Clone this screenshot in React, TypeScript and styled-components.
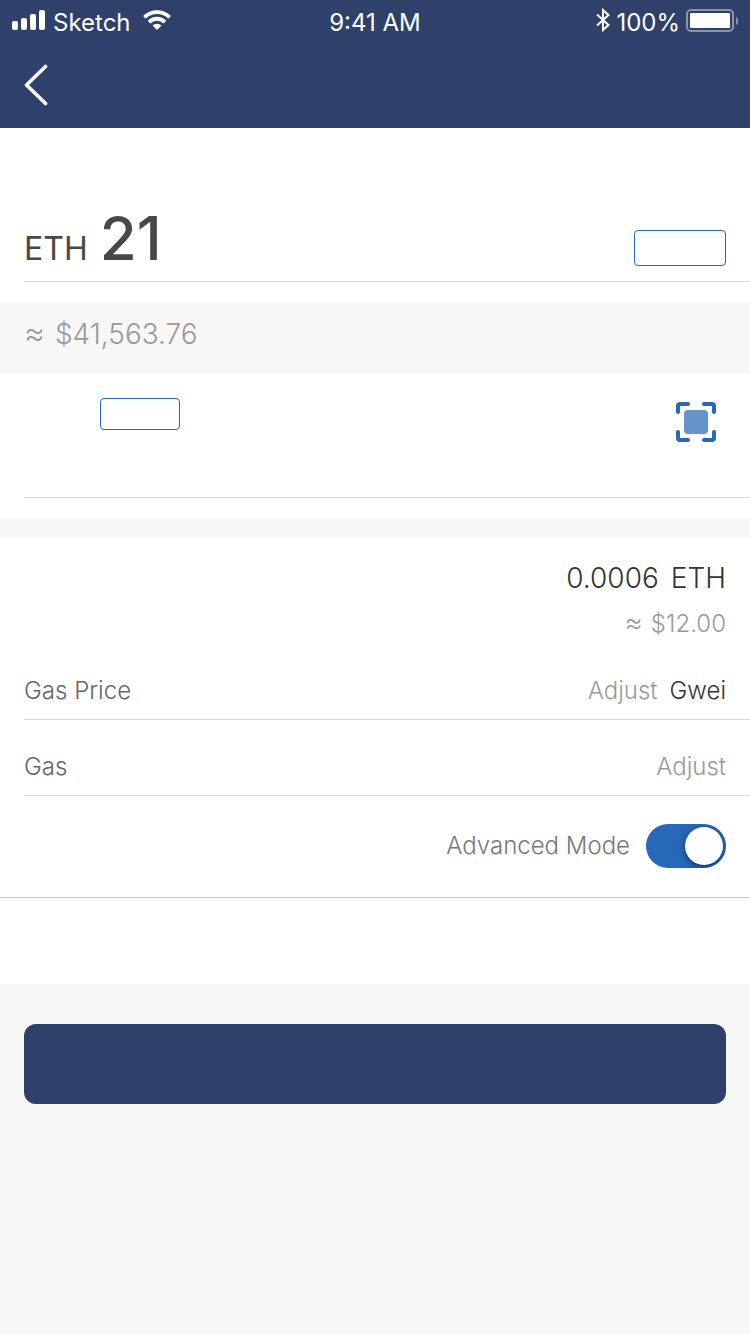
import React, { useState } from "react";
import styled, { createGlobalStyle } from "styled-components";

const navy = "#2f406b";
const blue = "#2768b9";
const line = "#d9d9d9";

const GlobalStyle = createGlobalStyle`
  *, *::before { box-sizing: border-box; }
  body {
    margin: 0;
    background: #f7f7f7;
    font-family: Inter, "Noto Sans", sans-serif;
    font-size: 24px;
    font-weight: 300;
    line-height: 32px;
  }
  button, input { font: inherit; color: inherit; margin: 0; padding: 0; border: 0; background: none; }
`;

const Header = styled.header`
  background: ${navy};
  color: #fff;
`;

const StatusBar = styled.div`
  display: grid;
  grid-template-columns: 1fr auto 1fr;
  height: 40px;
  padding: 0 12px;
  font-weight: 400;
`;

const StatusGroup = styled.div<{ $end?: boolean }>`
  display: flex;
  align-items: center;
  justify-content: ${(p) => (p.$end ? "flex-end" : "flex-start")};
  gap: ${(p) => (p.$end ? 6 : 8)}px;
  svg { flex: none; }
`;

const StatusText = styled.span`
  padding-top: 6px;
`;

const CarrierText = styled(StatusText)`
  padding-right: 4px;
`;

const NavBar = styled.nav`
  display: flex;
  align-items: center;
  height: 88px;
  padding: 2px 24px 0;
`;

const BackButton = styled.button`
  display: flex;
`;

const Panel = styled.section`
  background: #fff;
`;

const AmountPanel = styled(Panel)`
  padding: 82px 0 20px 24px;
`;

const AmountRow = styled.div`
  display: flex;
  align-items: flex-end;
  justify-content: space-between;
  padding: 0 24px 15px 0;
  border-bottom: 1px solid ${line};
`;

const AmountField = styled.label`
  display: flex;
  flex: 1;
  min-width: 0;
  align-items: baseline;
  gap: 12px;
  color: #484848;
  font-size: 32px;
  font-weight: 400;
`;

const AmountInput = styled.input`
  flex: 1;
  min-width: 0;
  height: 56px;
  font-size: 60px;
  font-weight: 500;
  line-height: 56px;
`;

const OutlineButton = styled.button<{ $width: number; $height: number }>`
  flex: none;
  width: ${(p) => p.$width}px;
  height: ${(p) => p.$height}px;
  border: 1px solid ${blue};
  border-radius: 4px;
`;

const FiatValue = styled.div<{ $large?: boolean }>`
  display: flex;
  align-items: baseline;
  gap: ${(p) => (p.$large ? 10 : 8)}px;
  height: 32px;
  color: #999;
  font-size: ${(p) => (p.$large ? 28 : 24)}px;
`;

const Approx = styled.span<{ $large?: boolean }>`
  font-size: ${(p) => (p.$large ? 32 : 28)}px;
  line-height: 28px;
`;

const FiatBand = styled.div`
  padding: 16px 24px 24px;
`;

const RecipientPanel = styled(Panel)`
  padding: 24px 0 20px 24px;
`;

const RecipientRow = styled.div`
  display: flex;
  align-items: flex-start;
  gap: 24px;
  height: 100px;
  padding: 0 34px 0 76px;
  border-bottom: 1px solid ${line};
`;

const RecipientInput = styled.input`
  flex: 1;
  min-width: 0;
  height: 48px;
`;

const ScanButton = styled.button`
  display: flex;
  padding-top: 4px;
`;

const FeePanel = styled(Panel)`
  margin-top: 20px;
  padding-bottom: 86px;
`;

const FeeSummary = styled.div`
  display: flex;
  flex-direction: column;
  align-items: flex-end;
  gap: 14px;
  padding: 24px 24px 4px;
`;

const FeeTotal = styled.div`
  display: flex;
  gap: 12px;
  color: #333;
  font-size: 28px;
`;

const FieldRow = styled.label`
  display: flex;
  align-items: center;
  gap: 12px;
  height: 76px;
  margin-left: 24px;
  padding: 18px 24px 0 0;
  border-bottom: 1px solid ${line};
  color: #666;
`;

const FieldInput = styled.input`
  flex: 1;
  min-width: 0;
  text-align: right;
  &::placeholder { color: #999; opacity: 1; }
`;

const Unit = styled.span`
  color: #333;
`;

const ModeRow = styled.label`
  display: flex;
  align-items: center;
  justify-content: flex-end;
  gap: 16px;
  padding: 28px 24px 29px;
  border-bottom: 1px solid #ccc;
  color: #777;
`;

const Switch = styled.input`
  appearance: none;
  display: flex;
  width: 80px;
  height: 44px;
  padding: 3px;
  border-radius: 22px;
  background: ${blue};
  overflow: hidden;
  &:not(:checked) { background: #ccc; }
  &::before {
    content: "";
    width: 38px;
    height: 38px;
    border-radius: 50%;
    background: #fff;
    box-shadow: 0 2px 6px rgba(0, 0, 0, 0.5);
  }
  &:checked::before { margin-left: auto; }
`;

const Actions = styled.footer`
  display: flex;
  padding: 40px 24px;
`;

const SubmitButton = styled.button`
  flex: 1;
  height: 80px;
  border-radius: 12px;
  background: ${navy};
`;

const SignalIcon = () => (
  <svg width="33" height="20" viewBox="0 0 33 20" fill="#fff" aria-hidden="true">
    <rect y="11" width="6" height="9" rx="2" />
    <rect x="9" y="8" width="6" height="12" rx="2" />
    <rect x="18" y="4" width="6" height="16" rx="2" />
    <rect x="27" width="6" height="20" rx="2" />
  </svg>
);

const WifiIcon = () => (
  <svg width="28" height="20" viewBox="0 0 28 20" fill="#fff" aria-hidden="true">
    <path d="M0 6A20 20 0 0 1 28 6L25.300 8.700A16.200 16.200 0 0 0 2.700 8.700Z" />
    <path d="M4.700 10.700A13.200 13.200 0 0 1 23.300 10.700L20.600 13.400A9.400 9.400 0 0 0 7.400 13.400Z" />
    <path d="M9.500 15.500A6.400 6.400 0 0 1 18.500 15.500L14 20Z" />
  </svg>
);

const BluetoothIcon = () => (
  <svg width="14" height="24" viewBox="0 0 14 24" fill="none" stroke="#fff" strokeWidth="2" aria-hidden="true">
    <path d="M1 6.500 12.500 17 7 22V2l5.500 5L1 17.500" />
  </svg>
);

const BatteryIcon = () => (
  <svg width="52" height="24" viewBox="0 0 52 24" fill="none" aria-hidden="true">
    <rect x="1" y="2" width="46" height="21" rx="4" stroke="#8a94ac" strokeWidth="2" />
    <rect x="4" y="5" width="40" height="15" rx="1" fill="#fff" />
    <path d="M50 9c3 1 3 7 0 8z" fill="#8a94ac" />
  </svg>
);

const BackIcon = () => (
  <svg width="24" height="42" viewBox="0 0 24 42" fill="none" aria-hidden="true">
    <path d="M21.500 2.500 2.500 21l19 18.500" stroke="#fff" strokeWidth="3.600" strokeLinecap="round" strokeLinejoin="round" />
  </svg>
);

const ScanIcon = () => (
  <svg width="40" height="40" viewBox="0 0 40 40" fill="none" aria-hidden="true">
    <path
      d="M2 10V4q0-2 2-2h8M28 2h8q2 0 2 2v6M38 30v6q0 2-2 2h-8M12 38H4q-2 0-2-2v-6"
      stroke={blue}
      strokeWidth="4"
      strokeLinecap="round"
    />
    <rect x="8" y="8" width="24" height="24" rx="4" fill="#6793cd" />
  </svg>
);

export default function App() {
  const [amount, setAmount] = useState("21");
  const [advanced, setAdvanced] = useState(true);

  return (
    <>
      <GlobalStyle />
      <Header>
        <StatusBar>
          <StatusGroup>
            <SignalIcon />
            <CarrierText>Sketch</CarrierText>
            <WifiIcon />
          </StatusGroup>
          <StatusGroup>
            <StatusText>9:41 AM</StatusText>
          </StatusGroup>
          <StatusGroup $end>
            <BluetoothIcon />
            <StatusText>100%</StatusText>
            <BatteryIcon />
          </StatusGroup>
        </StatusBar>
        <NavBar>
          <BackButton aria-label="Back">
            <BackIcon />
          </BackButton>
        </NavBar>
      </Header>
      <main>
        <AmountPanel>
          <AmountRow>
            <AmountField>
              ETH
              <AmountInput inputMode="decimal" value={amount} onChange={(e) => setAmount(e.target.value)} />
            </AmountField>
            <OutlineButton $width={92} $height={36} aria-label="Use full balance" />
          </AmountRow>
        </AmountPanel>
        <FiatBand>
          <FiatValue $large>
            <Approx $large>≈</Approx>
            <span>$41,563.76</span>
          </FiatValue>
        </FiatBand>
        <RecipientPanel>
          <RecipientRow>
            <OutlineButton $width={80} $height={32} aria-label="Choose contact" />
            <RecipientInput aria-label="Recipient address" />
            <ScanButton aria-label="Scan code">
              <ScanIcon />
            </ScanButton>
          </RecipientRow>
        </RecipientPanel>
        <FeePanel>
          <FeeSummary>
            <FeeTotal>
              <span>0.0006</span>
              <span>ETH</span>
            </FeeTotal>
            <FiatValue>
              <Approx>≈</Approx>
              <span>$12.00</span>
            </FiatValue>
          </FeeSummary>
          <FieldRow>
            Gas Price
            <FieldInput placeholder="Adjust" />
            <Unit>Gwei</Unit>
          </FieldRow>
          <FieldRow>
            Gas
            <FieldInput placeholder="Adjust" />
          </FieldRow>
          <ModeRow>
            Advanced Mode
            <Switch
              type="checkbox"
              role="switch"
              checked={advanced}
              onChange={(e) => setAdvanced(e.target.checked)}
            />
          </ModeRow>
        </FeePanel>
        <Actions>
          <SubmitButton aria-label="Send" />
        </Actions>
      </main>
    </>
  );
}
